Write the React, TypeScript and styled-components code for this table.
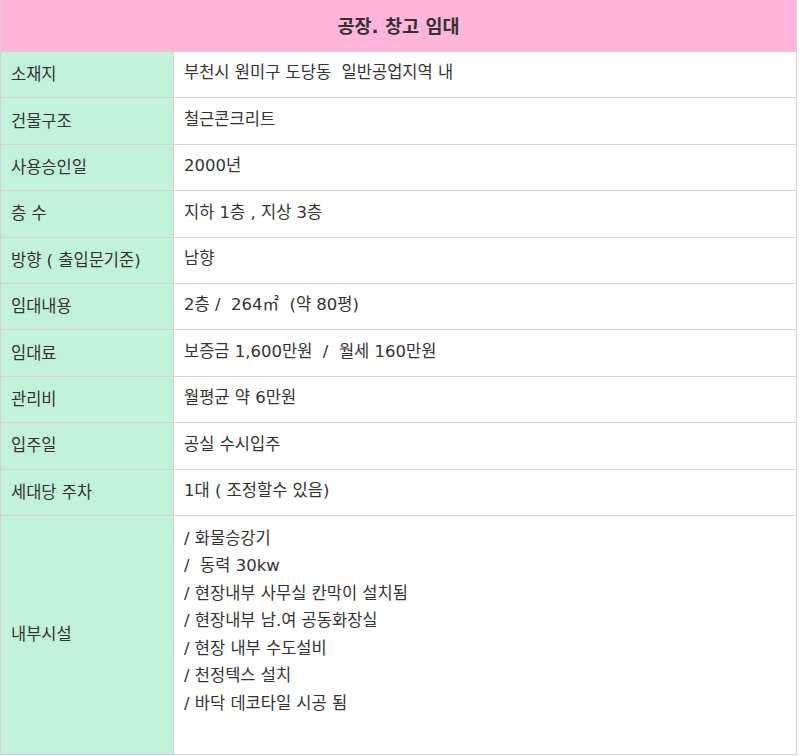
import React from 'react';
import styled, { createGlobalStyle } from 'styled-components';

const GlobalStyle = createGlobalStyle`
  html, body {
    margin: 0;
    padding: 0;
    background: #fff;
  }
  body {
    font-family: 'DejaVu Sans', 'Noto Sans CJK KR', sans-serif;
    color: #333;
  }
`;

interface Row {
  label: string;
  value: string[];
}

const rows: Row[] = [
  { label: '소재지', value: ['부천시 원미구 도당동  일반공업지역 내'] },
  { label: '건물구조', value: ['철근콘크리트'] },
  { label: '사용승인일', value: ['2000년'] },
  { label: '층 수', value: ['지하 1층 , 지상 3층'] },
  { label: '방향 ( 출입문기준)', value: ['남향'] },
  { label: '임대내용', value: ['2층 /  264㎡  (약 80평)'] },
  { label: '임대료', value: ['보증금 1,600만원  /  월세 160만원'] },
  { label: '관리비', value: ['월평균 약 6만원'] },
  { label: '입주일', value: ['공실 수시입주'] },
  { label: '세대당 주차', value: ['1대 ( 조정할수 있음)'] },
  {
    label: '내부시설',
    value: [
      '/ 화물승강기',
      '/  동력 30kw',
      '/ 현장내부 사무실 칸막이 설치됨',
      '/ 현장내부 남.여 공동화장실',
      '/ 현장 내부 수도설비',
      '/ 천정텍스 설치',
      '/ 바닥 데코타일 시공 됨',
      '',
    ],
  },
];

export default function App() {
  return (
    <>
      <GlobalStyle />
      <Table>
        <Header>공장. 창고 임대</Header>
        {rows.map((r) => {
          const tall = r.value.length > 1;
          return (
            <TableRow key={r.label} $tall={tall}>
              <Label>{r.label}</Label>
              <Value $tall={tall}>
                {r.value.map((line, i) => (
                  <Line key={i}>{line || '\u00a0'}</Line>
                ))}
              </Value>
            </TableRow>
          );
        })}
      </Table>
    </>
  );
}

const Table = styled.div`
  width: 797px;
  box-sizing: border-box;
  border-left: 1px solid #d3d3d3;
  border-right: 1px solid #d3d3d3;
  border-bottom: 1px solid #d3d3d3;
  display: flex;
  flex-direction: column;
`;

const Header = styled.div`
  height: 52px;
  background-color: #ffb4d9;
  border-bottom: 1px solid #d3d3d3;
  display: flex;
  align-items: center;
  justify-content: center;
  font-size: 18.5px;
  font-weight: bold;
  color: #333;
  padding-bottom: 2px;
  box-sizing: border-box;
  white-space: pre;
`;

const TableRow = styled.div<{ $tall: boolean }>`
  display: grid;
  grid-template-columns: 173px 1fr;
  height: ${(p) => (p.$tall ? '238px' : '46.4px')};
  box-sizing: border-box;
  border-bottom: 1px solid #d3d3d3;
  &:last-child {
    border-bottom: none;
  }
`;

const Label = styled.div`
  background-color: #c3f2db;
  border-right: 1px solid #d3d3d3;
  display: flex;
  align-items: center;
  padding-left: 10px;
  padding-bottom: 3px;
  font-size: 16.5px;
  color: #333;
  white-space: pre;
`;

const Value = styled.div<{ $tall: boolean }>`
  display: flex;
  flex-direction: column;
  justify-content: center;
  padding-left: 10px;
  padding-bottom: ${(p) => (p.$tall ? '0' : '3px')};
  font-size: 16.5px;
  color: #333;
  white-space: pre;
`;

const Line = styled.div`
  line-height: 27.5px;
`;
